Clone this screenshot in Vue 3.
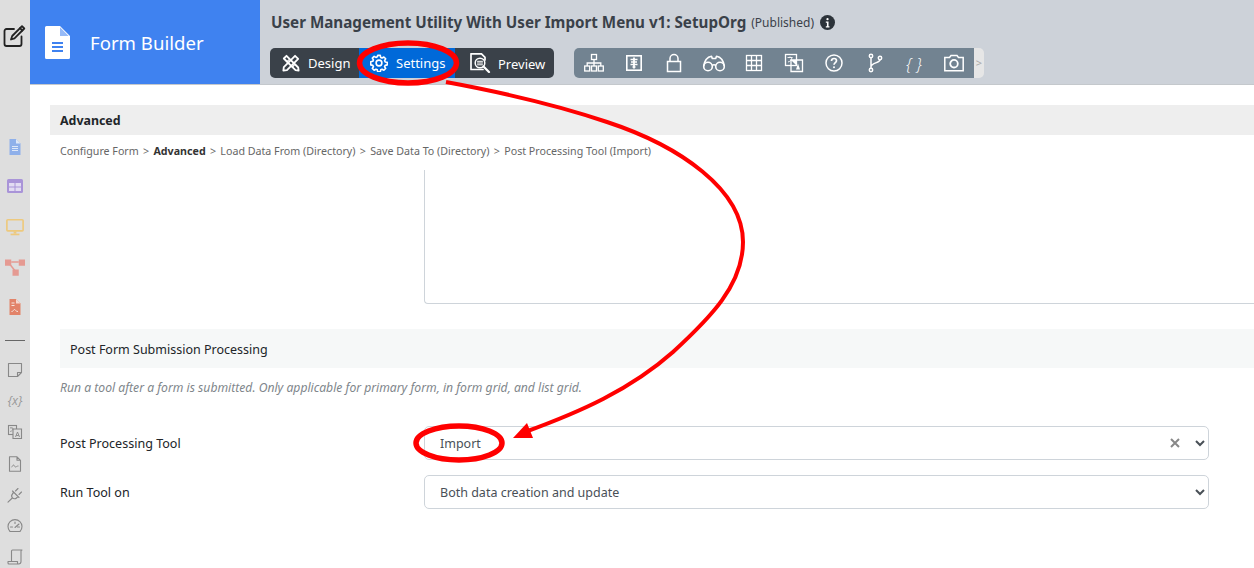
<template>
  <div class="page">
    <aside class="rail">
      <svg class="rail-edit" viewBox="0 0 24 24" fill="none" stroke="#222" stroke-width="1.8" stroke-linejoin="round" stroke-linecap="round">
        <path d="M12 5H4.500A2 2 0 0 0 2.500 7v13a2 2 0 0 0 2 2h13a2 2 0 0 0 2-2v-7.500" />
        <path d="M20 2.200 22.300 4.500 12.500 14.300 9 15.500 10.200 12z" />
        <path d="M18 4.200 20.300 6.500" />
      </svg>
      <div class="rail-top">
        <svg viewBox="-.5 -2 18 20" preserveAspectRatio="xMidYMid meet"><path fill="#8fb0ea" d="M3 0h6.500L14 4.500V16H3z"/><path fill="#dfe8f8" d="M9.500 0 14 4.500H9.500z"/><path stroke="#dfe8f8" stroke-width="1" d="M5.500 7.500h6M5.500 9.500h6M5.500 11.500h6"/></svg>
        <svg viewBox="-2 -1 20 20"><rect x="0" y="1" width="16" height="14" rx="1.500" fill="#a994d8"/><path fill="#e2dcf2" d="M2 5h5.500v3.500H2zM8.500 5H14v3.500H8.500zM2 9.500h5.500V13H2zM8.500 9.500H14V13H8.500z"/></svg>
        <svg viewBox="-1 -1 18 18" fill="none" stroke="#edc97e" stroke-width="1.500"><rect x=".7" y="1.500" width="14.600" height="10" rx=".8"/><path d="M8 12v2" stroke-width="2.500"/><path d="M4 14.700h8" stroke-width="1.500"/></svg>
        <svg viewBox="0 0 16 16"><g fill="#e59a92"><rect x="0" y="2" width="5" height="5"/><rect x="11" y="2" width="5" height="5"/><rect x="6" y="10" width="5" height="5"/></g><path stroke="#e59a92" stroke-width="1.200" d="M5 4h6M4 6l4 5"/></svg>
        <svg viewBox="-.5 -2 18 20"><path fill="#e28369" d="M3 0h6.500L14 4.500V16H3z"/><path fill="#f6d8cf" d="M9.500 0 14 4.500H9.500z"/><path fill="none" stroke="#f6e6e0" stroke-width="1" d="M5 12.500c2 0 2-2 3-2s1 2 3.500 2"/><path stroke="#f6e6e0" d="M5 4h3M5 6.500h3"/></svg>
      </div>
      <div class="rail-rule"></div>
      <div class="rail-bottom">
        <svg viewBox="0 0 16 16" fill="none" stroke="#888" stroke-width="1.100" stroke-linejoin="round"><path d="M1.500 1.500h13v9L10.500 14.500h-9zM14.500 10.500h-4v4"/></svg>
        <span class="rail-x">{x}</span>
        <svg viewBox="0 0 16 16" fill="none" stroke="#888" stroke-width="1.100"><rect x="1.500" y="1.500" width="8" height="9"/><path d="M6 5h8.500v9.500H6z" fill="#ddd"/><path d="M8.500 13l2-5 2 5M9.300 11.500h2.400" stroke-width=".9"/><path d="M3 4h3M4 3v1M3 7.500c2 0 3-2 3-3.500" stroke-width=".7"/></svg>
        <svg viewBox="0 0 16 16" fill="none" stroke="#888" stroke-width="1.100" stroke-linejoin="round"><path d="M2.500 .8h7.500l3.500 3.500v11h-11zM10 .8v3.500h3.500"/><path d="M4.500 11c1 0 1-2 2-2s1 2 2 2 1-1 3-1" stroke-width=".9"/></svg>
        <svg viewBox="0 0 16 16" fill="none" stroke="#888" stroke-width="1.100" stroke-linecap="round" stroke-linejoin="round"><path d="M6.500 5 11 9.500 9.500 11c-1.200 1.200-3 1-4-.1s-1.100-2.800 0-3.900zM5.300 11 1 15.200M8.500 4 11 1.500M12 7.500 14.500 5M5.500 4l6.500 6.500"/></svg>
        <svg viewBox="0 0 16 16" fill="none" stroke="#888" stroke-width="1.100" stroke-linecap="round"><path d="M3 13.500a7 7 0 1 1 10 0z"/><path d="M8 9.500 12 6M3.500 9h2M10.500 9h2M8 4v1.500"/></svg>
        <svg viewBox="0 0 16 16" fill="none" stroke="#888" stroke-width="1.100" stroke-linejoin="round"><path d="M4.500 12V2c0-.6.400-1 1-1H15c-.6 0-1 .4-1 1v10.500M1 12.500h9.500V14c0 .6.400 1 1 1H2c-.6 0-1-.4-1-1zM14 12.500c0 1.500-1 2.500-2.500 2.500"/></svg>
      </div>
    </aside>

    <div class="main">
      <header class="head">
        <div class="brand">
          <svg class="brand-doc" viewBox="0 0 25 33"><path fill="#fff" d="M0 1.500A1.500 1.500 0 0 1 1.500 0H15l10 10v21.500a1.500 1.500 0 0 1-1.500 1.500h-22A1.500 1.500 0 0 1 0 31.500z"/><path fill="#3f82f0" d="M15 0v10h10l-1.300 0-8.700-8.700z" opacity=".55"/><path stroke="#3f82f0" stroke-width="2" d="M7 17h11M7 21h11M7 25h11"/></svg>
          <span class="brand-name">Form Builder</span>
        </div>
        <div class="head-body">
          <div class="title-line">
            <span class="title">User Management Utility With User Import Menu v1: SetupOrg</span>
            <span class="status">(Published)</span>
            <svg class="info" viewBox="0 0 16 16"><circle cx="8" cy="8" r="8" fill="#2c333a"/><circle cx="8" cy="4.500" r="1.200" fill="#fff"/><path fill="#fff" d="M6.200 7h2.900v5h1v1.200H6.200V12h1.200V8.200H6.200z"/></svg>
          </div>
          <div class="toolbar">
            <div class="tabs">
              <button class="tab tab-design">
                <svg viewBox="0 0 20 20" fill="none" stroke="#fff" stroke-width="2" stroke-linejoin="round" stroke-linecap="round"><path d="M2 14.500 14.500 2 18 5.500 5.500 18 1.500 18.500z"/><path d="M2 5 5 2 18 15 18.500 18.500 15 18z"/><path d="M5.500 8.500l2-2M11.500 14.500l2-2" stroke-width="1.400"/></svg>
                Design
              </button>
              <button class="tab tab-settings">
                <svg viewBox="0 0 20 20" fill="none" stroke="#fff" stroke-width="1.800" stroke-linejoin="round"><circle cx="10" cy="10" r="3.200"/><path d="M8.600 1.500h2.800l.5 2.300 1.500.7 2-1.200 2 2-1.200 2 .7 1.500 2.300.5v2.800l-2.300.5-.7 1.500 1.200 2-2 2-2-1.200-1.500.7-.5 2.300H8.600l-.5-2.300-1.500-.7-2 1.200-2-2 1.200-2-.7-1.500-2.300-.5V8.600l2.300-.5.700-1.500-1.200-2 2-2 2 1.200 1.500-.7z"/></svg>
                Settings
              </button>
              <button class="tab tab-preview">
                <svg viewBox="0 0 21 20" fill="none" stroke="#fff" stroke-width="1.700" stroke-linecap="round" stroke-linejoin="round"><path d="M13 16.500H1V.8h10.500L15 4.300V7"/><circle cx="10" cy="10" r="4.800" fill="#3a4149" stroke-width="1.500"/><path d="M13.500 13.500 19 19" stroke-width="2.200"/><path d="M7.500 8.300h5M7.500 10h5M7.500 11.800h5" stroke-width="1"/></svg>
                Preview
              </button>
            </div>
            <div class="tools-wrap">
              <div class="tools">
                <svg viewBox="0 0 20 20" fill="none" stroke="#fff" stroke-width="1.300"><rect x="7.500" y="1.500" width="5" height="5"/><rect x=".7" y="13" width="5" height="5"/><rect x="7.500" y="13" width="5" height="5"/><rect x="14.300" y="13" width="5" height="5"/><path d="M10 6.500V13M3.200 13V10h13.600v3"/></svg>
                <svg viewBox="0 0 20 20" fill="none" stroke="#fff" stroke-width="1.600"><rect x="2.800" y="2.800" width="14.400" height="14.400"/><path d="M10 4.500v11" stroke-width="1.800"/><path d="M6.500 6.500h7M7 9h6M6.500 11.500h7M8.500 14h3" stroke-width="1.400"/></svg>
                <svg viewBox="0 0 20 20" fill="none" stroke="#fff" stroke-width="1.500"><rect x="3.500" y="8.500" width="13" height="10"/><path d="M6 8.500V5.500a4 4 0 0 1 8 0v3"/></svg>
                <svg class="wide" viewBox="0 0 24 20" fill="none" stroke="#fff" stroke-width="1.600" stroke-linejoin="round"><circle cx="6" cy="13.500" r="4.300"/><circle cx="18" cy="13.500" r="4.300"/><path d="M10 12.500c1.300-.9 2.700-.9 4 0M1.700 13C2.500 8 5 4 9.500 3.200l.8 2.300h3.400l.8-2.300C19 4 21.500 8 22.300 13"/></svg>
                <svg viewBox="0 0 20 20" fill="none" stroke="#fff" stroke-width="1.300"><rect x="2.500" y="2.500" width="15" height="15"/><path d="M7.500 2.500v15M12.500 2.500v15M2.500 7.500h15M2.500 12.500h15"/></svg>
                <svg viewBox="0 0 20 20" fill="none" stroke="#fff" stroke-width="1.300"><rect x="1.500" y="1.500" width="11" height="11"/><path d="M7 7h11.500v11.500H7z"/><path fill="#fff" stroke="none" d="M7 7h5.500v5.500zM12 16.500l2-6 2 6z"/><path d="M3.500 4.500h5M6 3.500v1M4 9c2.500-.5 3.500-2.500 4-4.500" stroke-width=".9"/></svg>
                <svg viewBox="0 0 20 20" fill="none" stroke="#fff" stroke-width="1.500"><circle cx="10" cy="10" r="8"/><path d="M7.500 8c0-1.500 1.100-2.500 2.500-2.500s2.500 1 2.500 2.300c0 1.700-2.500 2-2.500 4" stroke-width="1.700"/><circle cx="10" cy="14.300" r="1" fill="#fff" stroke="none"/></svg>
                <svg viewBox="0 0 20 20" fill="none" stroke="#fff" stroke-width="1.500"><circle cx="7" cy="3" r="1.700"/><circle cx="7" cy="17" r="1.700"/><circle cx="16" cy="5" r="1.700"/><path d="M7 4.700v10.600M16 6.700c0 3-9 3.500-9 7"/></svg>
                <span class="braces">{ }</span>
                <svg viewBox="0 0 20 20" fill="none" stroke="#fff" stroke-width="1.500"><path d="M.8 4.500h4.700L7 2.500h6l1.500 2h4.700v13.200H.8z"/><circle cx="10" cy="10.700" r="3.800" stroke-width="1.800"/></svg>
              </div>
              <div class="tools-more">&gt;</div>
            </div>
          </div>
        </div>
      </header>

      <main class="content">
        <div class="panel-title">Advanced</div>
        <nav class="crumbs">
          <span>Configure Form</span><i>&gt;</i><b>Advanced</b><i>&gt;</i><span>Load Data From (Directory)</span><i>&gt;</i><span>Save Data To (Directory)</span><i>&gt;</i><span>Post Processing Tool (Import)</span>
        </nav>
        <div class="editor-row"><div class="editor"></div></div>
        <div class="section">Post Form Submission Processing</div>
        <p class="hint">Run a tool after a form is submitted. Only applicable for primary form, in form grid, and list grid.</p>
        <div class="field first">
          <label>Post Processing Tool</label>
          <div class="control">
            <select class="select"><option>Import</option></select>
            <svg class="clear" viewBox="0 0 10 10" fill="none" stroke="#888" stroke-width="2"><path d="M1 1l8 8M9 1l-8 8"/></svg>
          </div>
        </div>
        <div class="field">
          <label>Run Tool on</label>
          <div class="control">
            <select class="select"><option>Both data creation and update</option></select>
          </div>
        </div>
      </main>
    </div>

    <svg class="marks" viewBox="0 0 1254 568" fill="none" stroke="#f00">
      <ellipse cx="408" cy="63" rx="48.500" ry="20" stroke-width="5.500"/>
      <ellipse cx="459" cy="443" rx="43" ry="17" stroke-width="5.500"/>
      <path d="M446 82C500 92 560 106 607 122C680 146 743 190 743 242C743 285 710 318 673 352C630 390 580 412 525 432" stroke-width="4"/>
      <path fill="#f00" stroke="none" d="M513 438 527 423 533 438z"/>
    </svg>
  </div>
</template>

<script setup>
</script>

<style>
html, body { margin: 0; background: #fff; overflow: hidden; }
</style>

<style scoped>
.page {
  width: 1254px; height: 568px; display: flex; position: relative; overflow: hidden;
  font-family: "Noto Sans", "Open Sans", sans-serif; color: #212529; background: #fff;
}
.rail { width: 30px; flex: none; background: #dedede; display: flex; flex-direction: column; align-items: center; }
.rail svg { display: block; }
.rail-edit { width: 24px; height: 24px; margin: 24px 0 0 -2px; }
.rail-top { margin-top: 89px; display: flex; flex-direction: column; gap: 20px; }
.rail-top svg { width: 20px; height: 20px; }
.rail-rule { width: 20px; height: 1px; background: #666; margin: 23px 0 0; flex: none; }
.rail-bottom { margin-top: 21px; display: flex; flex-direction: column; align-items: center; gap: 15.200px; }
.rail-bottom svg { width: 16px; height: 16px; flex: none; }
.rail-x { height: 16px; font: italic 12.500px/16px "Open Sans", sans-serif; color: #999; white-space: nowrap; }
.main { flex: 1; min-width: 0; display: flex; flex-direction: column; }
.head { height: 84px; flex: none; display: flex; background: #cdd2d9; border-bottom: 1px solid #c4c8cc; }
.brand { width: 230px; flex: none; background: #3f82f0; display: flex; align-items: center; padding-left: 15px; box-sizing: border-box; color: #fff; }
.brand-doc { width: 25px; height: 33px; }
.brand-name { margin-left: 20px; font-size: 18.600px; }
.head-body { flex: 1; padding: 12px 0 0 10px; min-width: 0; }
.title-line { display: flex; align-items: center; height: 20px; padding-left: 1px; white-space: nowrap; }
.title { font-size: 15.200px; font-weight: 700; color: #3a4149; }
.status { font-size: 12px; color: #3a4149; margin-left: 5px; }
.info { width: 15px; height: 15px; margin-left: 6px; }
.toolbar { display: flex; margin-top: 16px; }
.tabs { display: flex; height: 30px; background: #3a4149; border-radius: 5px; }
.tab { display: flex; align-items: center; height: 30px; box-sizing: border-box; border: 0; padding: 0; background: none; color: #fff; font: 13px "Noto Sans", sans-serif; white-space: nowrap; }
.tab svg { flex: none; }
.tab-design { width: 89px; padding-left: 12px; gap: 8px; }
.tab-design svg { width: 18px; height: 18px; }
.tab-settings { width: 96px; padding-left: 11px; gap: 8px; background: #0069d9; }
.tab-settings svg { width: 18px; height: 18px; }
.tab-preview { width: 99px; padding: 1px 0 0 15px; gap: 7px; }
.tab-preview svg { width: 21px; height: 20px; margin-top: -1px; }
.tools-wrap { display: flex; margin-left: 20px; height: 30px; }
.tools { width: 400px; box-sizing: border-box; padding-left: 10px; background: #728391; border-radius: 5px 0 0 5px; display: flex; align-items: center; gap: 20px; }
.tools svg { width: 20px; height: 20px; flex: none; }
.tools svg.wide { width: 24px; margin: 0 -2px; }
.braces { width: 20px; text-align: center; color: #fff; font: italic 300 17px "Open Sans", sans-serif; white-space: nowrap; }
.tools-more { width: 10px; background: #e6e6e6; color: #aaa; border-radius: 0 5px 5px 0; font-size: 11px; line-height: 30px; text-align: center; }
.content { flex: 1; padding: 20px 0 0 20px; min-width: 0; }
.panel-title { height: 30px; line-height: 31px; background: #eee; padding-left: 10px; font-size: 12.400px; font-weight: 700; color: #212529; }
.crumbs { height: 35px; line-height: 32px; padding-left: 10px; font-size: 10.680px; color: #666; white-space: nowrap; }
.crumbs b { color: #333; font-weight: 700; }
.crumbs i { font-style: normal; margin: 0 4.300px; }
.editor-row { padding-left: 374px; }
.editor { height: 133px; border: 1px solid #ced4da; border-top: 0; border-right: 0; border-radius: 0 0 0 4px; }
.section { margin: 25px 0 0 10px; height: 39px; line-height: 41px; background: #f6f8f8; padding-left: 10px; font-size: 12.500px; color: #212529; }
.hint { margin: 11px 0 0 10px; font-size: 12.170px; line-height: 18px; font-style: italic; color: #80868b; white-space: nowrap; }
.field { display: flex; align-items: center; padding-left: 10px; margin-top: 15px; height: 34px; }
.field.first { margin-top: 29px; }
.field label { width: 364px; flex: none; padding-top: 1px; font-size: 12.550px; color: #212529; }
.control { position: relative; width: 785px; height: 34px; }
.select { width: 100%; height: 34px; padding: 0 0 0 11px; border: 1px solid #ced4da; border-radius: 5px; background: #fff; color: #495057; font: 12.500px "Noto Sans", sans-serif; }
.clear { position: absolute; right: 29px; top: 12px; width: 10px; height: 10px; }
.marks { position: absolute; inset: 0; width: 1254px; height: 568px; pointer-events: none; }
</style>
